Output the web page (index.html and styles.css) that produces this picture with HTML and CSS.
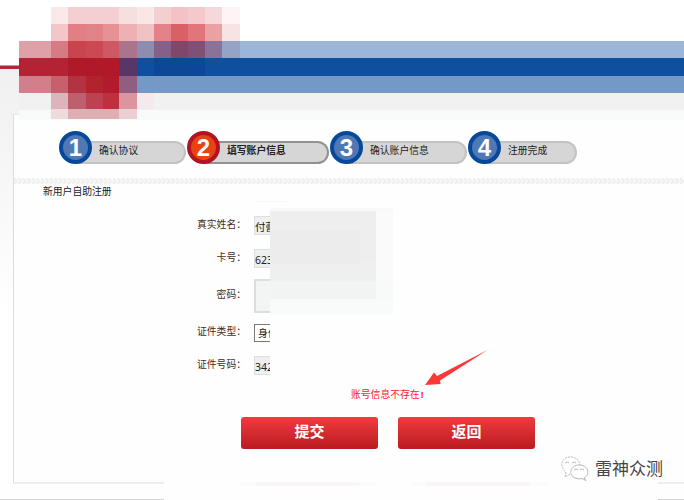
FILE: index.html
```html
<!DOCTYPE html>
<html lang="zh-CN">
<head>
<meta charset="utf-8">
<title>新用户自助注册</title>
<link rel="stylesheet" href="styles.css">
</head>
<body>
<header class="banner">
<svg class="mosaic" width="684" height="120" viewBox="0 0 684 120" shape-rendering="crispEdges">
<path fill="#b52637" d="M0 66h19v3H0z"/>
<path fill="#d5919a" d="M0 65h19v1H0z"/>
<path fill="#9bb6d8" d="M137 41h547v18H137z"/>
<path fill="#0e509f" d="M137 58h547v18H137z"/>
<path fill="#7499c7" d="M137 76h547v17H137z"/>
<path fill="#f1f1f1" d="M19 93h665v17H19z"/>
<path fill="#f9fafa" d="M19 110h665v10H19z"/>
<path fill="#fbe9e9" d="M51 7h17v17H51z"/><path fill="#f3cfd1" d="M68 7h51v17H68z"/><path fill="#f6e0de" d="M119 7h18v17h-18z"/><path fill="#f9e7e6" d="M137 7h17v17h-17z"/><path fill="#f3cfd2" d="M154 7h17v17h-17z"/><path fill="#f2c2c6" d="M171 7h17v17h-17z"/><path fill="#f3c9cb" d="M188 7h17v17h-17z"/><path fill="#f7d8da" d="M205 7h17v17h-17z"/><path fill="#fdf5f5" d="M222 7h18v17h-18z"/>
<path fill="#f3c7ca" d="M51 24h17v17H51z"/><path fill="#e17f85" d="M68 24h18v17H68z"/><path fill="#e28388" d="M86 24h17v17H86z"/><path fill="#e79193" d="M103 24h16v17h-16z"/><path fill="#edb1b5" d="M119 24h18v17h-18z"/><path fill="#f0c2c4" d="M137 24h17v17h-17z"/><path fill="#e38389" d="M154 24h17v17h-17z"/><path fill="#da6067" d="M171 24h17v17h-17z"/><path fill="#e1757b" d="M188 24h17v17h-17z"/><path fill="#eaa1a4" d="M205 24h17v17h-17z"/><path fill="#f8e3e4" d="M222 24h18v17h-18z"/>
<path fill="#dfa1a8" d="M19 41h32v17H19z"/><path fill="#d67b84" d="M51 41h17v17H51z"/><path fill="#ca444e" d="M68 41h18v17H68z"/><path fill="#cc4954" d="M86 41h17v17H86z"/><path fill="#ce5863" d="M103 41h16v17h-16z"/><path fill="#aa748c" d="M119 41h18v17h-18z"/><path fill="#8e8db0" d="M137 41h17v17h-17z"/><path fill="#85618a" d="M154 41h17v17h-17z"/><path fill="#804769" d="M171 41h17v17h-17z"/><path fill="#805075" d="M188 41h17v17h-17z"/><path fill="#8b7298" d="M205 41h17v17h-17z"/><path fill="#94a4c7" d="M222 41h18v17h-18z"/>
<path fill="#b32334" d="M19 58h49v18H19z"/><path fill="#af192a" d="M68 58h51v18H68z"/><path fill="#583768" d="M119 58h18v18h-18z"/><path fill="#0d4898" d="M154 58h51v18h-51z"/>
<path fill="#d17f8a" d="M19 76h32v17H19z"/><path fill="#c6606d" d="M51 76h17v17H51z"/><path fill="#b23442" d="M68 76h18v17H68z"/><path fill="#b2232e" d="M86 76h17v17H86z"/><path fill="#b21b2b" d="M103 76h16v17h-16z"/><path fill="#8f5e80" d="M119 76h18v17h-18z"/>
<path fill="#ddb4bc" d="M51 93h17v16H51z"/><path fill="#bd5f6c" d="M68 93h18v16H68z"/><path fill="#bb4250" d="M86 93h17v16H86z"/><path fill="#bd303d" d="M103 93h16v16h-16z"/><path fill="#db959c" d="M119 93h18v16h-18z"/><path fill="#f4e9ec" d="M137 93h17v16h-17z"/>
<path fill="#efdbde" d="M51 109h17v10H51z"/><path fill="#e0adb3" d="M68 109h51v10H68z"/><path fill="#edced2" d="M119 109h18v10h-18z"/>
</svg>
</header>
<main class="panel">
<ol class="steps">
<li class="step"><b class="num">1</b><span class="pill">确认协议</span></li>
<li class="step current"><b class="num">2</b><span class="pill">填写账户信息</span></li>
<li class="step"><b class="num">3</b><span class="pill">确认账户信息</span></li>
<li class="step"><b class="num">4</b><span class="pill">注册完成</span></li>
</ol>
<svg class="divider" width="670" height="6"><defs><pattern id="chev" width="4.5" height="6" patternUnits="userSpaceOnUse"><path d="M0 0l2.5 3L0 6" fill="none" stroke="#ececec" stroke-width="1.5"/></pattern></defs><rect width="670" height="6" fill="#f8f8f8"/><rect width="670" height="6" fill="url(#chev)"/></svg>
<h1 class="title">新用户自助注册</h1>
<form class="form">
<div class="row"><label>真实姓名：</label><span class="field">付蕾</span></div>
<div class="row"><label>卡号：</label><span class="field">623</span></div>
<div class="row tall"><label>密码：</label><span class="field"></span></div>
<div class="row"><label>证件类型：</label><span class="field select">身份</span></div>
<div class="row last"><label>证件号码：</label><span class="field">342</span></div>
<svg class="cover" width="140" height="115" shape-rendering="crispEdges">
<path fill="#f9f9f9" d="M16 7h123v3H16z"/><path fill="#eeeeee" d="M16 10h106v50H16z"/><path fill="#ececec" d="M16 29h90v34H16z"/><path fill="#efefef" d="M16 63h90v17H16z"/><path fill="#eeefef" d="M106 60h16v20h-16z"/><path fill="#fafafa" d="M122 10h17v70h-17z"/><path fill="#f2f4f3" d="M16 80h106v18H16z"/><path fill="#f8f9f9" d="M122 80h17v18h-17z"/><path fill="#f9fbfa" d="M16 98h123v16H16z"/><path fill="#f7f7f7" d="M0 0h32v1H0z"/>
</svg>
<p class="error">账号信息不存在<span class="bang">!</span></p>
<div class="actions"><button type="button">提交</button><button type="button">返回</button></div>
</form>
<svg class="arrow" width="66" height="38" viewBox="0 0 66 38"><path fill="#fc3838" d="M0 35L9 22.500L12 26L62.500 0L15 30.500L15.500 34z"/></svg>
</main>
<footer class="footer">
<svg class="rules" width="684" height="18" shape-rendering="crispEdges"><path fill="#ededed" d="M13 0h151v2H13zM658 0h26v2h-26z"/><path fill="#d4d4d4" d="M0 17h164v1H0zM658 17h26v1h-26z"/><path fill="#fdfafa" d="M240 0h136v4H240zM411 0h136v4H411z"/><path fill="#faf6f5" d="M256 0h104v4H256zM427 0h103v4H427z"/></svg>
<div class="mark">
<svg width="30" height="28" viewBox="0 0 30 28" fill="#fff" stroke="#999" stroke-width=".7"><path stroke-dasharray="2 1" d="M10 18l-5 3 1-5C-1 11 1 1 10 1c6 0 10 4 10 8"/><path d="M24 22c7-4 4-13-5-13-9 0-11 10-4 13 3 1 5 1 7 .5l4 2z"/><path fill="none" d="M5 7l2-1 2 1M12 7l2-1 2 1M14 14l2-1 2 1M20 14l2-1 2 1"/></svg>
<span>雷神众测</span>
</div>
</footer>
</body>
</html>
```
FILE: styles.css
```css
* { box-sizing: border-box; }
body {
  margin: 0;
  width: 684px;
  height: 500px;
  overflow: hidden;
  font: 10px/14px "Liberation Sans", "Noto Sans CJK SC", sans-serif;
  color: #222;
  background: linear-gradient(#fff 68px, #f0f0f0 68px, #fff 310px);
}
.banner { height: 114px; background: linear-gradient(#fff, #fff) 0 0 / 684px 66px no-repeat; }
.mosaic { display: block; position: relative; z-index: 1; }
.panel {
  position: relative;
  height: 368px;
  margin-left: 13px;
  border-left: 1px solid #ddd;
  border-top: 1px solid #e7e7e7;
  background: #fefefe;
}
.steps {
  display: grid;
  grid-template-columns: 128px 143px 138px 110px;
  height: 63px;
  margin: 0;
  padding: 16px 0 0 45px;
  list-style: none;
}
.step { display: flex; align-items: flex-start; }
.num {
  position: relative;
  z-index: 1;
  flex: none;
  width: 33px;
  height: 33px;
  border: 4px solid #05489c;
  border-radius: 50%;
  background: #5078b2;
  color: #fff;
  font-size: 24px;
  line-height: 25px;
  text-align: center;
}
.pill {
  flex: 1;
  height: 23px;
  margin: 10px 1px 0 -18px;
  padding-left: 25px;
  border: 2px solid #c3c3c3;
  border-left: 0;
  border-radius: 0 12px 12px 0;
  background: #d6d6d6;
  font-size: 9.8px;
  line-height: 16px;
  white-space: nowrap;
}
.current .num { background: #e84310; border-color: #b21427; }
.current .pill { border-color: #929292; color: #222; font-weight: bold; }
.divider { display: block; }
.title {
  height: 31px;
  margin: 0;
  padding: 1px 0 0 29px;
  font-size: 9.8px;
  font-weight: normal;
  line-height: 14px;
}
.form { position: relative; padding: 1px 0 0; }
.row { display: flex; align-items: center; height: 19px; margin-bottom: 14px; }
.row label {
  width: 232px;
  margin-right: 8px;
  color: #4a2a20;
  font-size: 9.8px;
  line-height: 14px;
  text-align: right;
  transform: translateY(-1px);
}
.field {
  width: 16px;
  height: 19px;
  overflow: hidden;
  border: 1px solid #dedede;
  border-right: 0;
  background: #eeefef;
  font: 10.5px/20px "Noto Sans", "Noto Sans CJK SC", sans-serif;
  white-space: nowrap;
}
.tall { height: 34px; margin: -3px 0 10px; }
.tall .field { height: 34px; background: #f3f4f4; border-width: 2px 0 2px 2px; }
.select { height: 18px; padding-left: 3px; border-color: #777; background: #fff; color: #111; font-size: 10px; line-height: 16px; }
.last { margin-bottom: 0; }
.cover { position: absolute; left: 240px; top: -14px; }
.error { margin: 13px 0 0 337px; color: #f22; font-size: 9.8px; line-height: 14px; }
.bang { margin-left: 1px; font-weight: bold; }
.actions { display: flex; gap: 20px; margin: 15px 0 0 227px; }
.actions button {
  width: 137px;
  height: 32px;
  padding: 0 0 4px;
  border: 0;
  border-radius: 3px;
  background: linear-gradient(#f13b3f, #b91b20);
  color: #fff;
  font: bold 15px/28px "Noto Sans CJK SC", sans-serif;
}
.arrow { position: absolute; left: 411px; top: 235px; }
.footer { position: relative; height: 18px; background: #fefefe; }
.rules { display: block; }
.mark { position: absolute; left: 560px; top: -26px; display: flex; gap: 5px; align-items: center; }
.mark span { color: #444; font-size: 17px; line-height: 28px; }
```
